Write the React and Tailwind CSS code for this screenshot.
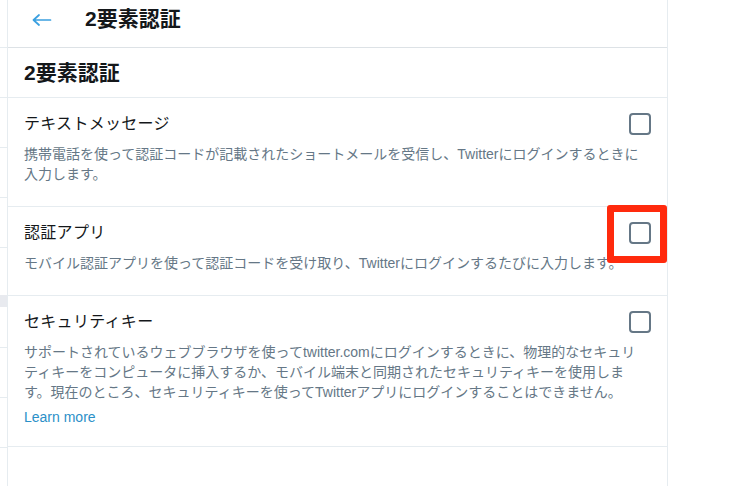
import React from 'react'

const font = { fontFamily: '"Liberation Sans", "Noto Sans CJK JP", sans-serif' }

function Checkbox() {
  return <div className="w-[22px] h-[22px] border-2 border-[#657786] rounded-[4px] shrink-0" />
}

function Option({ title, children, className }) {
  return (
    <div className={`border-b border-[#e6ecf0] pl-4 pr-4 pt-[15px] ${className}`}>
      <div className="flex items-center justify-between h-[22px]">
        <span className="text-[16px] leading-[22px] text-[#14171a] tracking-[0.3px]">{title}</span>
        <Checkbox />
      </div>
      <div className="mt-[9px] pr-[5px] text-[14px] leading-[20px] text-[#657786]">{children}</div>
    </div>
  )
}

export default function App() {
  return (
    <div className="relative flex w-[736px] h-[486px] bg-white overflow-hidden" style={font}>
      {/* sidebar peeking in from the left */}
      <div className="w-[8px] shrink-0 border-r border-[#e6ecf0] flex flex-col">
        <div className="h-[48px] border-b border-[#e6ecf0]" />
        <div className="h-[50px] border-b border-[#e6ecf0]" />
        <div className="h-[50px] border-b border-[#e6ecf0]" />
        <div className="h-[50px] border-b border-[#e6ecf0]" />
        <div className="h-[50px] border-b border-[#e6ecf0]" />
        <div className="h-[47px]" />
        <div className="h-[12px] bg-[#e8eaef]" />
        <div className="h-[41px] border-b border-[#e6ecf0]" />
        <div className="h-[50px] border-b border-[#e6ecf0]" />
        <div className="h-[50px] border-b border-[#e6ecf0]" />
      </div>

      <div className="w-[660px] shrink-0 border-r border-[#e6ecf0] flex flex-col">
        <div className="h-[48px] border-b border-[#dde2e6] flex items-start pt-[7px] pl-[24px]">
          <svg width="20" height="12" viewBox="0 0 20 12" className="mt-[7px]" fill="none" stroke="#3ba0e0" strokeWidth="1.7" strokeLinecap="round" strokeLinejoin="round">
            <path d="M1.5 6H18.5M7 1L1.5 6L7 11" />
          </svg>
          <span className="ml-[33px] text-[21px] leading-[24px] font-bold text-[#14171a]">2要素認証</span>
        </div>

        <div className="h-[50px] border-b border-[#e6ecf0] flex items-center px-4">
          <span className="text-[21px] leading-[24px] font-bold text-[#14171a]">2要素認証</span>
        </div>

        <Option title="テキストメッセージ" className="pb-[22px]">
          携帯電話を使って認証コードが記載されたショートメールを受信し、Twitterにログインするときに入力します。
        </Option>

        <Option title="認証アプリ" className="pb-[22px]">
          モバイル認証アプリを使って認証コードを受け取り、Twitterにログインするたびに入力します。
        </Option>

        <Option title="セキュリティキー" className="pb-[19px]">
          サポートされているウェブブラウザを使ってtwitter.comにログインするときに、物理的なセキュリティキーをコンピュータに挿入するか、モバイル端末と同期されたセキュリティキーを使用します。現在のところ、セキュリティキーを使ってTwitterアプリにログインすることはできません。
          <div className="mt-[5px]">
            <a className="text-[#2b90c8]">Learn more</a>
          </div>
        </Option>
      </div>

      {/* red highlight around the authenticator-app checkbox */}
      <div className="absolute left-[607px] top-[205px] w-[60px] h-[58px] border-[7px] border-[#ff2a0d] rounded-[3px]" />
    </div>
  )
}
